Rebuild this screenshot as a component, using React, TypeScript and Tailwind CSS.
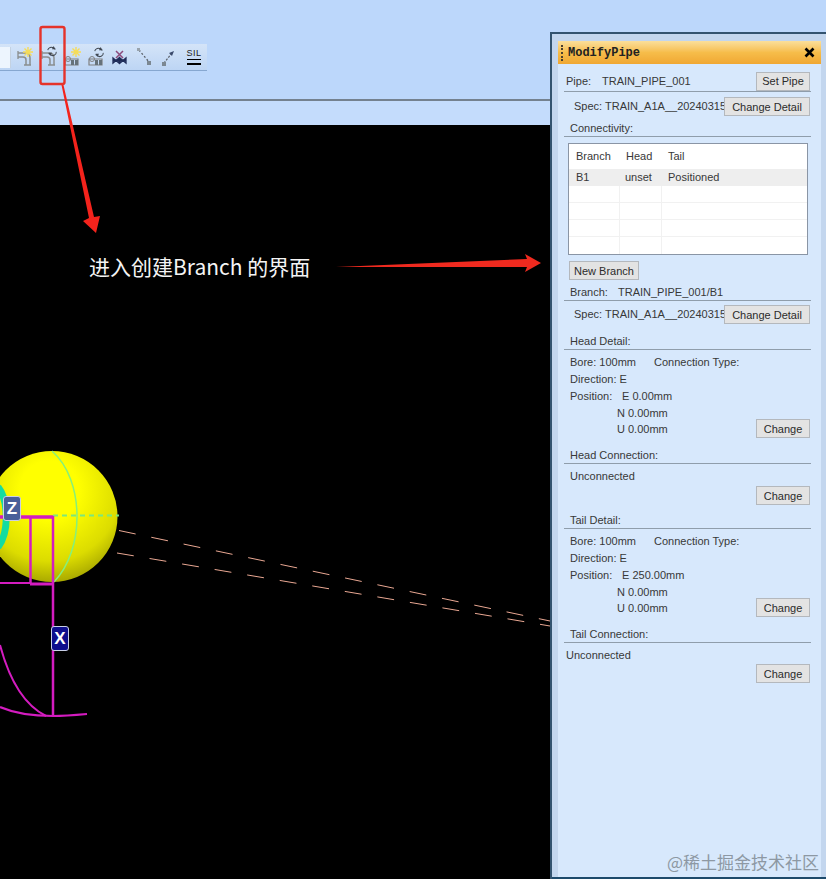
import React from 'react';

const PANEL_FONT = "'Liberation Sans', Arial, sans-serif";
const CJK_FONT = "'Noto Sans CJK SC', sans-serif";

const Btn = ({ children, className = '' }: { children: React.ReactNode; className?: string }) => (
  <div
    className={`flex h-[19px] items-center justify-center border border-[#b4b8bd] bg-[#e3e3e3] pt-px text-[11px] text-[#2b2b2b] ${className}`}
  >
    {children}
  </div>
);

const Divider = () => <div className="ml-[6px] mr-[10px] h-px bg-[#8f9dab]" />;

const Heading = ({ text, mt }: { text: string; mt: string }) => (
  <>
    <div className={`flex h-[16px] items-center pl-[12px] ${mt}`}>{text}</div>
    <Divider />
  </>
);

const ChangeBtn = () => <Btn className="w-[54px]">Change</Btn>;

const Detail = ({ east }: { east: string }) => (
  <div className="mt-[4px] flex h-[84px] justify-between pl-[12px] pr-[11px]">
    <div className="flex flex-col">
      <div className="flex h-[17px] items-center">
        <span className="w-[84px]">Bore: 100mm</span>
        <span>Connection Type:</span>
      </div>
      <div className="flex h-[17px] items-center">Direction: E</div>
      <div className="flex h-[17px] items-center">
        <span className="w-[52px]">Position:</span>
        <span>{east}</span>
      </div>
      <div className="flex h-[16px] items-center pl-[47px]">N 0.00mm</div>
      <div className="flex h-[17px] items-center pl-[47px]">U 0.00mm</div>
    </div>
    <div className="self-end">
      <ChangeBtn />
    </div>
  </div>
);

const SpecRow = ({ mt }: { mt: string }) => (
  <div className={`flex h-[19px] items-center pl-[16px] pr-[11px] ${mt}`}>
    <span className="w-[150px] overflow-hidden whitespace-nowrap">Spec: TRAIN_A1A__20240315</span>
    <Btn className="w-[86px]">Change Detail</Btn>
  </div>
);

const BranchTable = () => (
  <div className="ml-[10px] mt-[6px] h-[112px] w-[240px] overflow-hidden border border-[#8a95a5] bg-white pt-[5px]">
    <div className="flex h-[15px] items-center pl-[7px]">
      <span className="w-[50px]">Branch</span>
      <span className="w-[42px]">Head</span>
      <span>Tail</span>
    </div>
    <div className="mt-[5px] flex h-[17px] items-center bg-[#eeeeee] pl-[7px]">
      <span className="w-[49px]">B1</span>
      <span className="w-[43px]">unset</span>
      <span>Positioned</span>
    </div>
    {[0, 1, 2, 3].map((i) => (
      <div key={i} className={`flex h-[17px] ${i < 3 ? 'border-b border-[#f1f1f1]' : ''}`}>
        <div className="w-[51px] border-r border-[#f1f1f1]" />
        <div className="w-[42px] border-r border-[#f1f1f1]" />
      </div>
    ))}
  </div>
);

const Elbow = () => (
  <g fill="none" stroke="#8b8f8f" strokeWidth="1.5">
    <path d="M5 8h7c3 0 5 2 5 5v7" />
    <path d="M5 12h5c2 0 3 1 3 3v5" />
    <path d="M5 6v8M11 20h7" strokeWidth="1.3" />
  </g>
);

const Sun = ({ x, y }: { x: number; y: number }) => (
  <g stroke="#f6dc58" strokeWidth="1.4" transform={`translate(${x} ${y})`}>
    <path d="M-5 0h10M0-5v10M-3.5-3.5l7 7M-3.5 3.5l7-7" />
  </g>
);

const Cycle = ({ x, y }: { x: number; y: number }) => (
  <g fill="none" stroke="#3f4650" strokeWidth="1.2" transform={`translate(${x} ${y}) scale(0.85)`}>
    <path d="M-5 -1a4 4 0 0 1 7-2l2 1M5 1a4 4 0 0 1-7 3l-2-1" />
    <path d="M2-6l2 4-4 0M-2 6l-2-4 4 0" fill="#3f4650" stroke="none" />
  </g>
);

const Tray = () => (
  <g>
    <path d="M4 14h13v6H4z" fill="none" stroke="#808080" strokeWidth="1.2" />
    <circle cx="7" cy="14" r="2.5" fill="none" stroke="#808080" />
    <path d="M10 15h3v5h-3zM14 15h3v5h-3z" fill="#66727a" />
  </g>
);

const ToolIcon = ({ children }: { children: React.ReactNode }) => (
  <svg width="24" height="24" viewBox="0 0 24 24" className="shrink-0">
    {children}
  </svg>
);

const Toolbar = () => (
  <div className="flex h-[27px] w-[207px] items-center border-b border-[#86a7d0] bg-gradient-to-b from-[#d4e4f8] to-[#bdd5f4]">
    <div className="h-[21px] w-[13px] border-r border-[#c4d2e2] bg-[#edf5fe]" />
    <div className="ml-[2px] flex items-center">
      <ToolIcon>
        <Elbow />
        <Sun x={15} y={7} />
      </ToolIcon>
      <ToolIcon>
        <Elbow />
        <Cycle x={15} y={6} />
      </ToolIcon>
      <ToolIcon>
        <Tray />
        <Sun x={15} y={7} />
      </ToolIcon>
      <ToolIcon>
        <Tray />
        <Cycle x={14} y={7} />
      </ToolIcon>
      <ToolIcon>
        <path d="M4 13l6 5 0-5-6 5zM11 13l6 5 0-5-6 5z" fill="none" stroke="#1f2c58" strokeWidth="1.3" />
        <path d="M4 15.5h13" stroke="#1f2c58" />
        <path d="M7 6l7 7M14 6l-7 7" stroke="#8b4a7c" strokeWidth="1.5" />
      </ToolIcon>
      <ToolIcon>
        <path d="M6 5l10 12" stroke="#5a6068" strokeWidth="1.3" strokeDasharray="2 2" />
        <rect x="4" y="3" width="3" height="3" fill="#98a3ad" />
        <rect x="14" y="16" width="4" height="4" fill="#7c8892" />
      </ToolIcon>
      <ToolIcon>
        <path d="M7 18L15 8" stroke="#5a6068" strokeWidth="1.2" strokeDasharray="2 1.5" />
        <path d="M17 6l-5 2 3 3z" fill="#3a4a6c" />
        <rect x="5" y="17" width="4" height="4" fill="#7c8892" />
      </ToolIcon>
      <div className="flex w-[26px] shrink-0 flex-col items-center">
        <span className="text-[9px] leading-[9px] tracking-[0.5px] text-[#222]">SIL</span>
        <div className="mt-[1px] h-px w-[14px] bg-black" />
        <div className="mt-[3px] h-[1.5px] w-[14px] bg-black" />
      </div>
    </div>
  </div>
);

const Scene = () => (
  <svg viewBox="0 125 550 754" className="h-full w-full">
    <defs>
      <radialGradient id="ball" cx="0.48" cy="0.3" r="0.75">
        <stop offset="0.3" stopColor="#ffff00" />
        <stop offset="0.72" stopColor="#dcdc00" />
        <stop offset="1" stopColor="#9a9a00" />
      </radialGradient>
    </defs>
    <circle cx="52" cy="516.5" r="65.5" fill="url(#ball)" />
    <path d="M52 451C85 480 85 550 54 582" fill="none" stroke="#86f07a" strokeWidth="1.5" />
    <path d="M53 515.5H119" stroke="#7ce87c" strokeWidth="2" strokeDasharray="5 4" />
    <path d="M-2 487c11 14 11 46 0 60" fill="none" stroke="#14dca0" strokeWidth="7" />
    <path d="M119 530.5L550 621" stroke="#eaa893" strokeDasharray="17 16" />
    <path d="M117 553L550 626" stroke="#eaa893" strokeDasharray="17 16" />
    <g fill="none" stroke="#d41cc0">
      <path d="M0 517H53" strokeWidth="3.5" />
      <path d="M53 516V716" strokeWidth="2.5" />
      <path d="M30.5 518V584" strokeWidth="2.5" />
      <path d="M0 583H30" strokeWidth="2" />
      <path d="M30 584H53" strokeWidth="3" />
      <path d="M0 645C8 675 22 704 46 716" strokeWidth="2" />
      <path d="M0 707C14 713 30 716 53 716C64 716 76 715 87 714" strokeWidth="2.2" />
    </g>
  </svg>
);

const AxisBadge = ({ label, className }: { label: string; className: string }) => (
  <div
    className={`absolute flex h-[25px] w-[18px] items-center justify-center rounded-[3px] border border-[#c9cfe6] text-[17px] font-bold text-white ${className}`}
    style={{ fontFamily: PANEL_FONT }}
  >
    {label}
  </div>
);

const Annotations = () => (
  <svg width="826" height="879" viewBox="0 0 826 879" className="pointer-events-none absolute left-0 top-0">
    <rect x="40.5" y="27" width="24" height="57" rx="2" fill="none" stroke="#e5332a" strokeWidth="2.4" />
    <polygon points="61.5,85 63.5,85 94,217 100,216 96,233 83,221 89,218" fill="#f4231c" />
    <polygon points="336,267 527,259 525,254 541,263 525,272 527,267" fill="#ef2a1f" />
  </svg>
);

export default function App() {
  return (
    <div
      className="relative flex h-[879px] w-[826px] overflow-hidden bg-[#bcd7fb] text-[11px] text-[#383838]"
      style={{ fontFamily: PANEL_FONT }}
    >
      <div className="flex h-full w-[550px] shrink-0 flex-col">
        <div className="h-[44px] shrink-0" />
        <Toolbar />
        <div className="h-[28px] shrink-0" />
        <div className="h-[2px] shrink-0 bg-[#74818f]" />
        <div className="h-[24px] shrink-0 bg-[#c4dcfc]" />
        <div className="relative flex-1 overflow-hidden bg-black">
          <Scene />
          <AxisBadge label="Z" className="left-[3px] top-[371px] bg-[#4a5f99]" />
          <AxisBadge label="X" className="left-[51px] top-[501px] bg-[#0e0e8c]" />
        </div>
      </div>

      <div className="flex h-full flex-1 flex-col">
        <div className="h-[32px] shrink-0" />
        <div className="flex flex-1 flex-col border-l-2 border-t-2 border-[#33536f] bg-[#c3d6ee] pt-[7px]">
          <div className="flex flex-1 flex-col pl-[6px] pr-[5px]">
            <div className="flex h-[23px] shrink-0 items-center justify-between bg-gradient-to-b from-[#fbdf9a] via-[#f6bd4a] to-[#f0a732] pl-[3px] pr-[4px]">
              <div className="flex items-center">
                <div className="h-[16px] w-[2px] border-l-2 border-dotted border-[#4a4030]" />
                <span
                  className="ml-[5px] text-[12px] font-bold text-[#222]"
                  style={{ fontFamily: "'Liberation Mono', monospace" }}
                >
                  ModifyPipe
                </span>
              </div>
              <svg width="11" height="11" viewBox="0 0 11 11" className="mr-[2px]">
                <path d="M1.5 1.5l8 8M9.5 1.5l-8 8" stroke="#000" strokeWidth="2.6" />
              </svg>
            </div>

            <div className="flex-1 bg-[#d7e8fc] pt-[7px]">
              <div className="flex h-[20px] items-center pl-[8px] pr-[11px]">
                <span className="w-[36px]">Pipe:</span>
                <span className="flex-1">TRAIN_PIPE_001</span>
                <Btn className="w-[54px]">Set Pipe</Btn>
              </div>
              <Divider />
              <SpecRow mt="mt-[5px]" />
              <Heading text="Connectivity:" mt="mt-[4px]" />
              <BranchTable />
              <Btn className="ml-[11px] mt-[6px] w-[70px]">New Branch</Btn>
              <div className="mt-[4px] flex h-[16px] items-center pl-[12px]">
                <span className="w-[48px]">Branch:</span>
                <span>TRAIN_PIPE_001/B1</span>
              </div>
              <Divider />
              <SpecRow mt="mt-[4px]" />
              <Heading text="Head Detail:" mt="mt-[9px]" />
              <Detail east="E 0.00mm" />
              <Heading text="Head Connection:" mt="mt-[9px]" />
              <div className="mt-[4px] flex h-[16px] items-center pl-[12px]">Unconnected</div>
              <div className="mt-[2px] flex justify-end pr-[11px]">
                <ChangeBtn />
              </div>
              <Heading text="Tail Detail:" mt="mt-[7px]" />
              <Detail east="E 250.00mm" />
              <Heading text="Tail Connection:" mt="mt-[9px]" />
              <div className="mt-[4px] flex h-[16px] items-center pl-[8px]">Unconnected</div>
              <div className="mt-[1px] flex justify-end pr-[11px]">
                <ChangeBtn />
              </div>
            </div>
          </div>
          <div className="h-[2px] shrink-0 bg-[#1d4a6b]" />
        </div>
      </div>

      <Annotations />
      <div
        className="absolute left-[89px] top-[251px] whitespace-nowrap text-[21px] leading-[30px] text-[#f4f4f4]"
        style={{ fontFamily: CJK_FONT }}
      >
        进入创建Branch 的界面
      </div>
      <div
        className="absolute left-[667px] top-[850px] whitespace-nowrap text-[17px] leading-[24px] text-[#8d98a3]"
        style={{ fontFamily: CJK_FONT }}
      >
        @稀土掘金技术社区
      </div>
    </div>
  );
}
